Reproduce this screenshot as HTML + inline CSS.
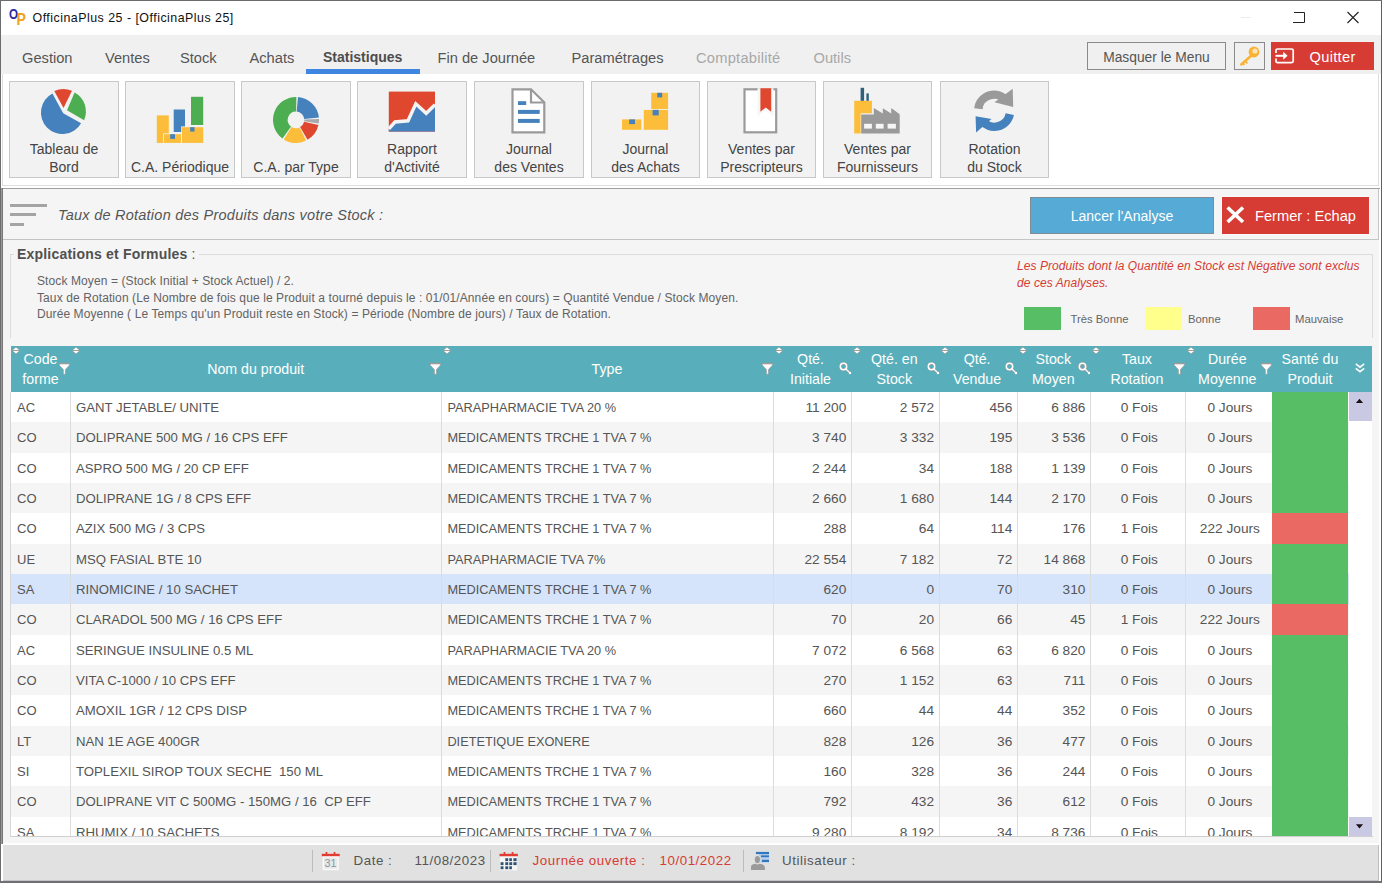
<!DOCTYPE html>
<html lang="fr"><head><meta charset="utf-8"><title>OfficinaPlus 25</title>
<style>
*{box-sizing:border-box;margin:0;padding:0}
html,body{width:1382px;height:883px;overflow:hidden;background:#fff}
body{position:relative;font-family:"Liberation Sans",sans-serif;color:#555;font-size:13px}
.a{position:absolute}
svg{position:absolute;overflow:visible}
/* frame */
#fl{left:0;top:0;width:1px;height:883px;background:#6c6c70}
#fr{left:1381px;top:0;width:1px;height:883px;background:#606064}
#ft{left:0;top:0;width:1382px;height:1px;background:#6c6c70}
#fb{left:0;top:881px;width:1382px;height:2px;background:#707074}
/* title */
#title{left:32.5px;top:9px;font-size:12.4px;letter-spacing:.49px;color:#111;line-height:18px;white-space:pre}
/* menu */
#menubar{left:1px;top:35px;width:1380px;height:39px;background:#f0f0f0}
.mi{position:absolute;top:48px;font-size:14.67px;line-height:20px;color:#555;white-space:pre}
.mi.dis{color:#a8a8a8}
.mi.act{font-weight:bold;color:#4d4d4d;font-size:14px}
#tabline{left:306px;top:69px;width:114px;height:5px;background:#3f86e2}
.tbtn{position:absolute;top:42px;height:28px;border:1px solid #8a8a8a;background:#f0f0f0;font-size:14.67px;color:#555;text-align:center;line-height:29px}
#quit{left:1271px;top:42px;width:103px;height:28px;background:#d63c33;color:#fff;font-size:14.67px;line-height:30px}
/* ribbon */
#ribbon{left:2px;top:74px;width:1377px;height:112px;border:1px solid #dedede;border-top:none;background:#fff}
.rb{position:absolute;top:81px;width:110px;height:97px;border:1px solid #c8c8c8;background:#f2f2f2;font-size:14px;line-height:18.6px;color:#444;text-align:center}
.rb .t{position:absolute;left:0;right:0;bottom:.3px}
/* content */
#sep{left:1px;top:188px;width:1379px;height:1px;background:#a0a0a0}
#content{left:3px;top:189px;width:1376px;height:654px;background:#f5f5f5}
#cl1{left:1px;top:188px;width:1px;height:656px;background:#9a9a9a}
#cl2{left:2px;top:188px;width:1px;height:656px;background:#777}
#tline{left:3px;top:239px;width:1375px;height:1px;background:#c4c4c4}
.bar{position:absolute;left:10px;height:3px;background:#a4a4a4}
#ptitle{left:58px;top:206px;font-size:14.5px;font-style:italic;line-height:18px;color:#555;white-space:pre;letter-spacing:.24px}
#lancer{left:1030px;top:197px;width:184px;height:37px;background:#55aad6;border:1px solid #7f8c96;color:#fff;font-size:14.05px;text-align:center;line-height:37px}
#fermer{left:1222px;top:197px;width:147px;height:37px;background:#d63c33;color:#fff;font-size:14.67px;line-height:39px;box-shadow:0 0 0 1px #fafafa}
/* groupbox */
#gb{left:10px;top:254px;width:1363px;height:84px;border:1px solid #dcdcdc;border-bottom:none}
#gbl{left:14px;top:245px;padding:0 3px;background:#f5f5f5;font-size:14px;letter-spacing:.2px;line-height:18px;color:#505050;white-space:pre}
.ex{position:absolute;left:37px;font-size:12px;letter-spacing:.1px;line-height:16px;color:#636363;white-space:pre}
.warn{position:absolute;left:1017px;font-size:12px;letter-spacing:.07px;font-style:italic;color:#d63c33;line-height:16px;white-space:pre}
.lg{position:absolute;top:307px;width:37px;height:23px}
.lgt{position:absolute;top:311px;font-size:11.3px;line-height:16px;color:#666;white-space:pre}
/* table */
#thead{left:11px;top:346px;width:1361px;height:46px;background:#58afbb;color:#fff;font-size:14.2px;overflow:hidden}
.th{position:absolute;top:0;text-align:center;line-height:20px;padding-top:3px;white-space:pre}
.th.one{padding-top:13px}
#tbody{left:11px;top:392px;width:1361px;height:444px;background:#fff;overflow:hidden}
#tbot{left:11px;top:836px;width:1362px;height:1px;background:#cfcfcf}
.row{position:absolute;left:0;width:1338px;height:30.4px;background:#fff}
.row.alt{background:#f5f5f5}
.row.sel{background:#d5e4fb}
.c{position:absolute;top:0;height:31px;line-height:30px;padding-top:1px;font-size:13px;color:#555;white-space:pre;overflow:hidden}
.c.al{padding-left:6px}
.c.ar{text-align:right;padding-right:5px}
.c.ac{text-align:center;padding-left:3px}
.hg{background:#57be65;padding:0}
.hr{background:#ea6a63;padding:0}
.vl{position:absolute;top:0;width:1px;height:445px;background:#dcdcdc}
#sbar{left:1349px;top:392px;width:23px;height:444px;background:#fff}
.sbtn{position:absolute;left:0;width:23px;background:#c9c9e3}
/* status */
#stw{left:3px;top:843px;width:1376px;height:2px;background:#fff}
#status{left:3px;top:845px;width:1376px;height:36px;background:#e1e1e1;border-right:1px solid #bdbdbd;border-bottom:1px solid #c4c4c4}
.st{position:absolute;top:852px;font-size:13.33px;line-height:18px;color:#555;white-space:pre;letter-spacing:.55px}
.st.red{color:#d63c33}
.ss{position:absolute;top:850px;width:1px;height:22px;background:#bcbcbc}
</style></head><body>
<div class="a" id="title">OfficinaPlus 25 - [OfficinaPlus 25]</div>
<svg style="left:0;top:0" width="30" height="30" viewBox="0 0 30 30"><text x="9" y="19.3" font-family="Liberation Sans" font-weight="bold" font-size="14" fill="#2b2ba5" textLength="9" lengthAdjust="spacingAndGlyphs">O</text><text x="16.6" y="25" font-family="Liberation Sans" font-weight="bold" font-size="16.5" fill="#f2a11e" textLength="9.4" lengthAdjust="spacingAndGlyphs">P</text></svg>
<svg style="left:1241px;top:17px" width="10" height="1" viewBox="0 0 10 1"><rect width="10" height="1" fill="#ececec"/></svg>
<svg style="left:1293px;top:12px" width="12" height="11" viewBox="0 0 12 11"><path d="M1 .5H11.5V10.5H0" fill="none" stroke="#222" stroke-width="1"/></svg>
<svg style="left:1347px;top:12px" width="12" height="11" viewBox="0 0 12 11"><path d="M.5 0L11.5 11M11.5 0L.5 11" fill="none" stroke="#222" stroke-width="1.1"/></svg>

<div class="a" id="menubar"></div>
<span class="mi" style="left:22px">Gestion</span>
<span class="mi" style="left:105px">Ventes</span>
<span class="mi" style="left:180px">Stock</span>
<span class="mi" style="left:249.5px">Achats</span>
<span class="mi act" style="left:323px;top:47px">Statistiques</span>
<span class="mi" style="left:437.5px">Fin de Journée</span>
<span class="mi" style="left:571.5px">Paramétrages</span>
<span class="mi dis" style="left:696px;letter-spacing:.25px">Comptabilité</span>
<span class="mi dis" style="left:813.5px">Outils</span>
<div class="a" id="tabline"></div>
<div class="tbtn" style="left:1087px;width:139px;font-size:13.8px">Masquer le Menu</div>
<div class="tbtn" style="left:1234px;width:31px"></div>
<svg style="left:1238px;top:45px" width="24" height="22" viewBox="0 0 24 22"><path d="M14 10L3.2 19.5" stroke="#f9b233" stroke-width="2.4" stroke-linecap="round"/><path d="M7 15.5L9.5 18.5M4.5 17.5L6.5 20" stroke="#f9b233" stroke-width="1.6"/><circle cx="16" cy="7" r="5.4" fill="#f9b233"/><circle cx="17" cy="6" r="2.6" fill="#f8e3bd"/></svg>
<div class="a" id="quit"><span class="a" style="left:38.5px;top:0;letter-spacing:.3px">Quitter</span></div>
<svg style="left:1275px;top:48px" width="20" height="16" viewBox="0 0 20 16"><path d="M1 5V2.6Q1 1 2.6 1H16.6Q18.2 1 18.2 2.6V13Q18.2 14.6 16.6 14.6H2.6Q1 14.6 1 13V10.6" fill="none" stroke="#fff" stroke-width="1.7"/><path d="M.5 7.8H11" stroke="#fff" stroke-width="2"/><path d="M8.2 3.8L12.6 7.8L8.2 11.8Z" fill="#fff"/></svg>

<div class="a" id="ribbon"></div>
<div class="rb" style="left:9px;width:110px"><div class="t">Tableau de<br>Bord</div></div>
<div class="rb" style="left:125px;width:110px"><div class="t">C.A. Périodique</div></div>
<div class="rb" style="left:241px;width:110px"><div class="t">C.A. par Type</div></div>
<div class="rb" style="left:357px;width:110px"><div class="t">Rapport<br>d'Activité</div></div>
<div class="rb" style="left:474px;width:110px"><div class="t">Journal<br>des Ventes</div></div>
<div class="rb" style="left:591px;width:109px"><div class="t">Journal<br>des Achats</div></div>
<div class="rb" style="left:707px;width:109px"><div class="t">Ventes par<br>Prescripteurs</div></div>
<div class="rb" style="left:823px;width:109px"><div class="t">Ventes par<br>Fournisseurs</div></div>
<div class="rb" style="left:940px;width:109px"><div class="t">Rotation<br>du Stock</div></div>

<svg style="left:0;top:0" width="1382" height="190" viewBox="0 0 1382 190"><path d="M63.2 113.2L81.1 123.2A21.5 21.5 0 1 1 52.4 93.5Z" fill="#4581bd"/><path d="M63.5 108.0L54.3 91.1A21 21 0 0 1 72.0 90.8Z" fill="#e0472f"/><path d="M67.0 110.3L74.6 92.5A21.5 21.5 0 0 1 84.1 120.2Z" fill="#4cae50"/><rect x="191.0" y="96.8" width="12.2" height="28.2" fill="#4cae50"/><rect x="173.7" y="109.5" width="11.3" height="22.5" fill="#4581bd"/><rect x="156.8" y="115.4" width="12.0" height="27.5" fill="#fbbd3a"/><rect x="163.2" y="133.4" width="18.6" height="9.5" fill="#f2f2f2"/><rect x="164.0" y="134.2" width="17.0" height="8.7" fill="#fbbd3a"/><rect x="181.2" y="126.4" width="22.0" height="16.5" fill="#f2f2f2"/><rect x="182.0" y="127.2" width="21.2" height="15.7" fill="#fbbd3a"/><rect x="170.2" y="134.2" width="4.8" height="4.7" fill="#4581bd"/><rect x="190.2" y="127.2" width="4.3" height="4.4" fill="#4581bd"/><path d="M282.5 138.5A23 23 0 0 1 296.4 96.9L296.1 111.6A8.3 8.3 0 0 0 291.1 126.6Z" fill="#4cae50"/><path d="M298.0 97.0A23 23 0 0 1 318.9 117.5L304.3 119.0A8.3 8.3 0 0 0 296.7 111.6Z" fill="#4581bd"/><path d="M319.0 119.1A23 23 0 0 1 318.7 123.5L304.2 121.2A8.3 8.3 0 0 0 304.3 119.6Z" fill="#a9a9a9"/><path d="M318.4 125.1A23 23 0 0 1 307.5 139.8L300.1 127.1A8.3 8.3 0 0 0 304.1 121.8Z" fill="#e0472f"/><path d="M306.1 140.6A23 23 0 0 1 283.8 139.4L291.6 126.9A8.3 8.3 0 0 0 299.6 127.4Z" fill="#fbbd3a"/><rect x="388.8" y="91.6" width="46.2" height="40.0" fill="#e0472f"/><path d="M388.8 128.8L395 122L408 120.8L415.8 103.8L426.2 113.3L435 104.7L435 131.6L388.8 131.6Z" fill="#4581bd"/><path d="M388.8 128.8L395 122L408 120.8L415.8 103.8L426.2 113.3L435 104.7" fill="none" stroke="#f4f4f4" stroke-width="3.4" stroke-linejoin="miter"/><path d="M512.5 89.3H531L544.3 102.5V132.3H512.5Z" fill="#fff" stroke="#9a9a9a" stroke-width="2.2"/><path d="M531 89.3V102.5H544.3" fill="none" stroke="#9a9a9a" stroke-width="2.2"/><rect x="518.0" y="101.2" width="8.2" height="3.8" fill="#4581bd"/><rect x="518.0" y="109.9" width="21.7" height="4.0" fill="#4581bd"/><rect x="518.0" y="118.9" width="21.7" height="4.0" fill="#4581bd"/><rect x="651.2" y="92.8" width="16.9" height="16.2" fill="#fbbd3a"/><rect x="643.8" y="109.9" width="24.3" height="19.9" fill="#fbbd3a"/><rect x="622.0" y="119.4" width="19.3" height="10.4" fill="#fbbd3a"/><rect x="657.3" y="92.8" width="4.9" height="4.6" fill="#4581bd"/><rect x="652.6" y="109.9" width="6.1" height="5.5" fill="#4581bd"/><rect x="629.2" y="119.4" width="5.8" height="4.7" fill="#4581bd"/><rect x="744.5" y="89.3" width="31.7" height="43" fill="#fff" stroke="#9a9a9a" stroke-width="2.2"/><path d="M757.5 88.2H773.5V116.5L765.5 110L757.5 116.5Z" fill="#f6f6f6"/><path d="M760.4 88.2H771.2V111.8L765.8 107.4L760.4 111.8Z" fill="#e0472f"/><path d="M854.2 100.8H871.9V113.3H860.6V133.4H854.2Z" fill="#fbbd3a"/><rect x="860.6" y="87.8" width="3.5" height="13.0" fill="#2f607c"/><rect x="866.4" y="93.4" width="2.4" height="7.4" fill="#2f607c"/><path d="M861.2 133.5V114.5H873.8V107.9L882.8 113.4V108.2L891.2 113.4V107.9L899.7 114.2V133.5Z" fill="#9a9a9a"/><rect x="864.1" y="123.8" width="7.8" height="4.8" fill="#f6f6f6"/><rect x="875.8" y="123.8" width="7.8" height="4.8" fill="#f6f6f6"/><rect x="887.6" y="123.8" width="8.3" height="4.8" fill="#f6f6f6"/><path d="M978.4 108.7A15.7 15.7 0 0 1 1006.5 100.9" fill="none" stroke="#9a9a9a" stroke-width="8.4"/><path d="M1012.7 88.8L1013.2 107L994.5 102.3Z" fill="#9a9a9a"/><path d="M1009.8 114.2A15.7 15.7 0 0 1 981.7 120.3" fill="none" stroke="#4581bd" stroke-width="8.4"/><path d="M975.6 116.3L976.1 132.5L991.5 119Z" fill="#4581bd"/></svg>
<div class="a" id="sep"></div>
<div class="a" id="content"></div>
<div class="a" id="cl1"></div><div class="a" id="cl2"></div>
<div class="a" id="tline"></div><div class="a" style="left:1378px;top:189px;width:1px;height:51px;background:#c4c4c4"></div>
<i class="bar" style="top:204px;width:37px"></i><i class="bar" style="top:213px;width:25.5px"></i><i class="bar" style="top:223px;width:13.5px"></i>
<div class="a" id="ptitle">Taux de Rotation des Produits dans votre Stock :</div>
<div class="a" id="lancer">Lancer l'Analyse</div>
<div class="a" id="fermer"><span class="a" style="left:33px;top:0">Fermer : Echap</span></div>
<svg style="left:1225.6px;top:206.2px" width="19" height="18" viewBox="0 0 19 18"><path d="M1.6 1.5L17 16M17 1.5L1.6 16" stroke="#fff" stroke-width="3.6" fill="none"/></svg>

<div class="a" id="gb"></div>
<div class="a" id="gbl"><b>Explications et Formules</b> :</div>
<div class="ex" style="top:273px">Stock Moyen = (Stock Initial + Stock Actuel) / 2.</div>
<div class="ex" style="top:289.5px">Taux de Rotation (Le Nombre de fois que le Produit a tourné depuis le : 01/01/Année en cours) = Quantité Vendue / Stock Moyen.</div>
<div class="ex" style="top:306px">Durée Moyenne ( Le Temps qu'un Produit reste en Stock) = Période (Nombre de jours) / Taux de Rotation.</div>
<div class="warn" style="top:258px">Les Produits dont la Quantité en Stock est Négative sont exclus</div>
<div class="warn" style="top:274.5px">de ces Analyses.</div>
<i class="lg" style="left:1024px;background:#57be65"></i><span class="lgt" style="left:1070.5px">Très Bonne</span>
<i class="lg" style="left:1145px;background:#ffff8c"></i><span class="lgt" style="left:1188px">Bonne</span>
<i class="lg" style="left:1253px;background:#ea6a63"></i><span class="lgt" style="left:1295px">Mauvaise</span>

<div class="a" id="thead">
<span class="th" style="left:0;width:59px">Code<br>forme</span>
<span class="th one" style="left:59px;width:371.4px">Nom du produit</span>
<span class="th one" style="left:430.4px;width:331.1px">Type</span>
<span class="th" style="left:761.5px;width:76px">Qté.<br>Initiale</span>
<span class="th" style="left:840.3px;width:86px">Qté. en<br>Stock</span>
<span class="th" style="left:928.1px;width:76px">Qté.<br>Vendue</span>
<span class="th" style="left:1006.3px;width:72px">Stock<br>Moyen</span>
<span class="th" style="left:1079.4px;width:93px">Taux<br>Rotation</span>
<span class="th" style="left:1174.3px;width:84px">Durée<br>Moyenne</span>
<span class="th" style="left:1260.5px;width:77px">Santé du<br>Produit</span>
</div>
<svg style="left:12.3px;top:347px" width="8" height="7" viewBox="0 0 8 7"><path d="M4 -.2L8 3.5L4 7.2L0 3.5Z" fill="#a59c9c"/><path d="M4 .5L7 3.1H1Z M1 3.9H7L4 6.5Z" fill="#fff"/></svg><svg style="left:72.0px;top:347px" width="8" height="7" viewBox="0 0 8 7"><path d="M4 -.2L8 3.5L4 7.2L0 3.5Z" fill="#a59c9c"/><path d="M4 .5L7 3.1H1Z M1 3.9H7L4 6.5Z" fill="#fff"/></svg><svg style="left:443.4px;top:347px" width="8" height="7" viewBox="0 0 8 7"><path d="M4 -.2L8 3.5L4 7.2L0 3.5Z" fill="#a59c9c"/><path d="M4 .5L7 3.1H1Z M1 3.9H7L4 6.5Z" fill="#fff"/></svg><svg style="left:774.5px;top:347px" width="8" height="7" viewBox="0 0 8 7"><path d="M4 -.2L8 3.5L4 7.2L0 3.5Z" fill="#a59c9c"/><path d="M4 .5L7 3.1H1Z M1 3.9H7L4 6.5Z" fill="#fff"/></svg><svg style="left:853.3px;top:347px" width="8" height="7" viewBox="0 0 8 7"><path d="M4 -.2L8 3.5L4 7.2L0 3.5Z" fill="#a59c9c"/><path d="M4 .5L7 3.1H1Z M1 3.9H7L4 6.5Z" fill="#fff"/></svg><svg style="left:941.1px;top:347px" width="8" height="7" viewBox="0 0 8 7"><path d="M4 -.2L8 3.5L4 7.2L0 3.5Z" fill="#a59c9c"/><path d="M4 .5L7 3.1H1Z M1 3.9H7L4 6.5Z" fill="#fff"/></svg><svg style="left:1019.3px;top:347px" width="8" height="7" viewBox="0 0 8 7"><path d="M4 -.2L8 3.5L4 7.2L0 3.5Z" fill="#a59c9c"/><path d="M4 .5L7 3.1H1Z M1 3.9H7L4 6.5Z" fill="#fff"/></svg><svg style="left:1092.4px;top:347px" width="8" height="7" viewBox="0 0 8 7"><path d="M4 -.2L8 3.5L4 7.2L0 3.5Z" fill="#a59c9c"/><path d="M4 .5L7 3.1H1Z M1 3.9H7L4 6.5Z" fill="#fff"/></svg><svg style="left:1187.3px;top:347px" width="8" height="7" viewBox="0 0 8 7"><path d="M4 -.2L8 3.5L4 7.2L0 3.5Z" fill="#a59c9c"/><path d="M4 .5L7 3.1H1Z M1 3.9H7L4 6.5Z" fill="#fff"/></svg><svg style="left:59.0px;top:363.3px" width="11" height="12" viewBox="0 0 11 12"><path d="M.3 .3H10.4V2.2L6.4 6.6V11.2H4.4V6.6L.3 2.2Z" fill="#fff" stroke="#9c9292" stroke-width=".6"/><rect x="0" y="0" width="10.7" height="1.3" fill="#a39999"/></svg><svg style="left:430.4px;top:363.3px" width="11" height="12" viewBox="0 0 11 12"><path d="M.3 .3H10.4V2.2L6.4 6.6V11.2H4.4V6.6L.3 2.2Z" fill="#fff" stroke="#9c9292" stroke-width=".6"/><rect x="0" y="0" width="10.7" height="1.3" fill="#a39999"/></svg><svg style="left:761.5px;top:363.3px" width="11" height="12" viewBox="0 0 11 12"><path d="M.3 .3H10.4V2.2L6.4 6.6V11.2H4.4V6.6L.3 2.2Z" fill="#fff" stroke="#9c9292" stroke-width=".6"/><rect x="0" y="0" width="10.7" height="1.3" fill="#a39999"/></svg><svg style="left:1174.3px;top:363.3px" width="11" height="12" viewBox="0 0 11 12"><path d="M.3 .3H10.4V2.2L6.4 6.6V11.2H4.4V6.6L.3 2.2Z" fill="#fff" stroke="#9c9292" stroke-width=".6"/><rect x="0" y="0" width="10.7" height="1.3" fill="#a39999"/></svg><svg style="left:1260.5px;top:363.3px" width="11" height="12" viewBox="0 0 11 12"><path d="M.3 .3H10.4V2.2L6.4 6.6V11.2H4.4V6.6L.3 2.2Z" fill="#fff" stroke="#9c9292" stroke-width=".6"/><rect x="0" y="0" width="10.7" height="1.3" fill="#a39999"/></svg><svg style="left:839.0px;top:362px" width="13" height="13" viewBox="0 0 13 13"><circle cx="4.5" cy="4.5" r="3.2" fill="none" stroke="#a09696" stroke-width="2.4"/><path d="M7 7L11 11" stroke="#a09696" stroke-width="2.2" stroke-linecap="round"/><circle cx="4.5" cy="4.5" r="3.2" fill="none" stroke="#fff" stroke-width="1.5"/><path d="M7 7L10.6 10.6" stroke="#fff" stroke-width="1.2"/><circle cx="11" cy="11" r="1.2" fill="#fff"/></svg><svg style="left:926.8px;top:362px" width="13" height="13" viewBox="0 0 13 13"><circle cx="4.5" cy="4.5" r="3.2" fill="none" stroke="#a09696" stroke-width="2.4"/><path d="M7 7L11 11" stroke="#a09696" stroke-width="2.2" stroke-linecap="round"/><circle cx="4.5" cy="4.5" r="3.2" fill="none" stroke="#fff" stroke-width="1.5"/><path d="M7 7L10.6 10.6" stroke="#fff" stroke-width="1.2"/><circle cx="11" cy="11" r="1.2" fill="#fff"/></svg><svg style="left:1005.0px;top:362px" width="13" height="13" viewBox="0 0 13 13"><circle cx="4.5" cy="4.5" r="3.2" fill="none" stroke="#a09696" stroke-width="2.4"/><path d="M7 7L11 11" stroke="#a09696" stroke-width="2.2" stroke-linecap="round"/><circle cx="4.5" cy="4.5" r="3.2" fill="none" stroke="#fff" stroke-width="1.5"/><path d="M7 7L10.6 10.6" stroke="#fff" stroke-width="1.2"/><circle cx="11" cy="11" r="1.2" fill="#fff"/></svg><svg style="left:1078.1px;top:362px" width="13" height="13" viewBox="0 0 13 13"><circle cx="4.5" cy="4.5" r="3.2" fill="none" stroke="#a09696" stroke-width="2.4"/><path d="M7 7L11 11" stroke="#a09696" stroke-width="2.2" stroke-linecap="round"/><circle cx="4.5" cy="4.5" r="3.2" fill="none" stroke="#fff" stroke-width="1.5"/><path d="M7 7L10.6 10.6" stroke="#fff" stroke-width="1.2"/><circle cx="11" cy="11" r="1.2" fill="#fff"/></svg>
<svg style="left:1355px;top:363px" width="10" height="10" viewBox="0 0 10 10"><path d="M.8 .8L5 4.2L9.2 .8M.8 5.3L5 8.7L9.2 5.3" fill="none" stroke="#fff" stroke-width="1.5"/></svg>
<div class="a" id="tbody">
<div class="row" style="top:0px;height:30px"><span class="c al" style="left:0.0px;width:59.0px">AC</span><span class="c al" style="left:59.0px;width:371.4px;font-size:13.2px">GANT JETABLE/ UNITE</span><span class="c al" style="left:430.4px;width:331.1px;font-size:12.75px">PARAPHARMACIE TVA 20 %</span><span class="c ar" style="left:761.5px;width:78.8px;font-size:13.7px">11 200</span><span class="c ar" style="left:840.3px;width:87.8px;font-size:13.7px">2 572</span><span class="c ar" style="left:928.1px;width:78.2px;font-size:13.7px">456</span><span class="c ar" style="left:1006.3px;width:73.1px;font-size:13.7px">6 886</span><span class="c ac" style="left:1079.4px;width:94.9px;font-size:13.7px">0 Fois</span><span class="c ac" style="left:1174.3px;width:86.2px;font-size:13.7px">0 Jours</span><span class="c hg" style="left:1260.5px;width:76.8px"></span></div>
<div class="row alt" style="top:30px;height:31px"><span class="c al" style="left:0.0px;width:59.0px">CO</span><span class="c al" style="left:59.0px;width:371.4px;font-size:13.2px">DOLIPRANE 500 MG / 16 CPS EFF</span><span class="c al" style="left:430.4px;width:331.1px;font-size:12.75px">MEDICAMENTS TRCHE 1 TVA 7 %</span><span class="c ar" style="left:761.5px;width:78.8px;font-size:13.7px">3 740</span><span class="c ar" style="left:840.3px;width:87.8px;font-size:13.7px">3 332</span><span class="c ar" style="left:928.1px;width:78.2px;font-size:13.7px">195</span><span class="c ar" style="left:1006.3px;width:73.1px;font-size:13.7px">3 536</span><span class="c ac" style="left:1079.4px;width:94.9px;font-size:13.7px">0 Fois</span><span class="c ac" style="left:1174.3px;width:86.2px;font-size:13.7px">0 Jours</span><span class="c hg" style="left:1260.5px;width:76.8px"></span></div>
<div class="row" style="top:61px;height:30px"><span class="c al" style="left:0.0px;width:59.0px">CO</span><span class="c al" style="left:59.0px;width:371.4px;font-size:13.2px">ASPRO 500 MG / 20 CP EFF</span><span class="c al" style="left:430.4px;width:331.1px;font-size:12.75px">MEDICAMENTS TRCHE 1 TVA 7 %</span><span class="c ar" style="left:761.5px;width:78.8px;font-size:13.7px">2 244</span><span class="c ar" style="left:840.3px;width:87.8px;font-size:13.7px">34</span><span class="c ar" style="left:928.1px;width:78.2px;font-size:13.7px">188</span><span class="c ar" style="left:1006.3px;width:73.1px;font-size:13.7px">1 139</span><span class="c ac" style="left:1079.4px;width:94.9px;font-size:13.7px">0 Fois</span><span class="c ac" style="left:1174.3px;width:86.2px;font-size:13.7px">0 Jours</span><span class="c hg" style="left:1260.5px;width:76.8px"></span></div>
<div class="row alt" style="top:91px;height:30px"><span class="c al" style="left:0.0px;width:59.0px">CO</span><span class="c al" style="left:59.0px;width:371.4px;font-size:13.2px">DOLIPRANE 1G / 8 CPS EFF</span><span class="c al" style="left:430.4px;width:331.1px;font-size:12.75px">MEDICAMENTS TRCHE 1 TVA 7 %</span><span class="c ar" style="left:761.5px;width:78.8px;font-size:13.7px">2 660</span><span class="c ar" style="left:840.3px;width:87.8px;font-size:13.7px">1 680</span><span class="c ar" style="left:928.1px;width:78.2px;font-size:13.7px">144</span><span class="c ar" style="left:1006.3px;width:73.1px;font-size:13.7px">2 170</span><span class="c ac" style="left:1079.4px;width:94.9px;font-size:13.7px">0 Fois</span><span class="c ac" style="left:1174.3px;width:86.2px;font-size:13.7px">0 Jours</span><span class="c hg" style="left:1260.5px;width:76.8px"></span></div>
<div class="row" style="top:121px;height:31px"><span class="c al" style="left:0.0px;width:59.0px">CO</span><span class="c al" style="left:59.0px;width:371.4px;font-size:13.2px">AZIX 500 MG / 3 CPS</span><span class="c al" style="left:430.4px;width:331.1px;font-size:12.75px">MEDICAMENTS TRCHE 1 TVA 7 %</span><span class="c ar" style="left:761.5px;width:78.8px;font-size:13.7px">288</span><span class="c ar" style="left:840.3px;width:87.8px;font-size:13.7px">64</span><span class="c ar" style="left:928.1px;width:78.2px;font-size:13.7px">114</span><span class="c ar" style="left:1006.3px;width:73.1px;font-size:13.7px">176</span><span class="c ac" style="left:1079.4px;width:94.9px;font-size:13.7px">1 Fois</span><span class="c ac" style="left:1174.3px;width:86.2px;font-size:13.7px">222 Jours</span><span class="c hr" style="left:1260.5px;width:76.8px"></span></div>
<div class="row alt" style="top:152px;height:30px"><span class="c al" style="left:0.0px;width:59.0px">UE</span><span class="c al" style="left:59.0px;width:371.4px;font-size:13.2px">MSQ FASIAL BTE 10</span><span class="c al" style="left:430.4px;width:331.1px;font-size:12.75px">PARAPHARMACIE TVA 7%</span><span class="c ar" style="left:761.5px;width:78.8px;font-size:13.7px">22 554</span><span class="c ar" style="left:840.3px;width:87.8px;font-size:13.7px">7 182</span><span class="c ar" style="left:928.1px;width:78.2px;font-size:13.7px">72</span><span class="c ar" style="left:1006.3px;width:73.1px;font-size:13.7px">14 868</span><span class="c ac" style="left:1079.4px;width:94.9px;font-size:13.7px">0 Fois</span><span class="c ac" style="left:1174.3px;width:86.2px;font-size:13.7px">0 Jours</span><span class="c hg" style="left:1260.5px;width:76.8px"></span></div>
<div class="row sel" style="top:182px;height:30px"><span class="c al" style="left:0.0px;width:59.0px">SA</span><span class="c al" style="left:59.0px;width:371.4px;font-size:13.2px">RINOMICINE / 10 SACHET</span><span class="c al" style="left:430.4px;width:331.1px;font-size:12.75px">MEDICAMENTS TRCHE 1 TVA 7 %</span><span class="c ar" style="left:761.5px;width:78.8px;font-size:13.7px">620</span><span class="c ar" style="left:840.3px;width:87.8px;font-size:13.7px">0</span><span class="c ar" style="left:928.1px;width:78.2px;font-size:13.7px">70</span><span class="c ar" style="left:1006.3px;width:73.1px;font-size:13.7px">310</span><span class="c ac" style="left:1079.4px;width:94.9px;font-size:13.7px">0 Fois</span><span class="c ac" style="left:1174.3px;width:86.2px;font-size:13.7px">0 Jours</span><span class="c hg" style="left:1260.5px;width:76.8px"></span></div>
<div class="row alt" style="top:212px;height:31px"><span class="c al" style="left:0.0px;width:59.0px">CO</span><span class="c al" style="left:59.0px;width:371.4px;font-size:13.2px">CLARADOL 500 MG / 16 CPS EFF</span><span class="c al" style="left:430.4px;width:331.1px;font-size:12.75px">MEDICAMENTS TRCHE 1 TVA 7 %</span><span class="c ar" style="left:761.5px;width:78.8px;font-size:13.7px">70</span><span class="c ar" style="left:840.3px;width:87.8px;font-size:13.7px">20</span><span class="c ar" style="left:928.1px;width:78.2px;font-size:13.7px">66</span><span class="c ar" style="left:1006.3px;width:73.1px;font-size:13.7px">45</span><span class="c ac" style="left:1079.4px;width:94.9px;font-size:13.7px">1 Fois</span><span class="c ac" style="left:1174.3px;width:86.2px;font-size:13.7px">222 Jours</span><span class="c hr" style="left:1260.5px;width:76.8px"></span></div>
<div class="row" style="top:243px;height:30px"><span class="c al" style="left:0.0px;width:59.0px">AC</span><span class="c al" style="left:59.0px;width:371.4px;font-size:13.2px">SERINGUE INSULINE 0.5 ML</span><span class="c al" style="left:430.4px;width:331.1px;font-size:12.75px">PARAPHARMACIE TVA 20 %</span><span class="c ar" style="left:761.5px;width:78.8px;font-size:13.7px">7 072</span><span class="c ar" style="left:840.3px;width:87.8px;font-size:13.7px">6 568</span><span class="c ar" style="left:928.1px;width:78.2px;font-size:13.7px">63</span><span class="c ar" style="left:1006.3px;width:73.1px;font-size:13.7px">6 820</span><span class="c ac" style="left:1079.4px;width:94.9px;font-size:13.7px">0 Fois</span><span class="c ac" style="left:1174.3px;width:86.2px;font-size:13.7px">0 Jours</span><span class="c hg" style="left:1260.5px;width:76.8px"></span></div>
<div class="row alt" style="top:273px;height:30px"><span class="c al" style="left:0.0px;width:59.0px">CO</span><span class="c al" style="left:59.0px;width:371.4px;font-size:13.2px">VITA C-1000 / 10 CPS EFF</span><span class="c al" style="left:430.4px;width:331.1px;font-size:12.75px">MEDICAMENTS TRCHE 1 TVA 7 %</span><span class="c ar" style="left:761.5px;width:78.8px;font-size:13.7px">270</span><span class="c ar" style="left:840.3px;width:87.8px;font-size:13.7px">1 152</span><span class="c ar" style="left:928.1px;width:78.2px;font-size:13.7px">63</span><span class="c ar" style="left:1006.3px;width:73.1px;font-size:13.7px">711</span><span class="c ac" style="left:1079.4px;width:94.9px;font-size:13.7px">0 Fois</span><span class="c ac" style="left:1174.3px;width:86.2px;font-size:13.7px">0 Jours</span><span class="c hg" style="left:1260.5px;width:76.8px"></span></div>
<div class="row" style="top:303px;height:31px"><span class="c al" style="left:0.0px;width:59.0px">CO</span><span class="c al" style="left:59.0px;width:371.4px;font-size:13.2px">AMOXIL 1GR / 12 CPS DISP</span><span class="c al" style="left:430.4px;width:331.1px;font-size:12.75px">MEDICAMENTS TRCHE 1 TVA 7 %</span><span class="c ar" style="left:761.5px;width:78.8px;font-size:13.7px">660</span><span class="c ar" style="left:840.3px;width:87.8px;font-size:13.7px">44</span><span class="c ar" style="left:928.1px;width:78.2px;font-size:13.7px">44</span><span class="c ar" style="left:1006.3px;width:73.1px;font-size:13.7px">352</span><span class="c ac" style="left:1079.4px;width:94.9px;font-size:13.7px">0 Fois</span><span class="c ac" style="left:1174.3px;width:86.2px;font-size:13.7px">0 Jours</span><span class="c hg" style="left:1260.5px;width:76.8px"></span></div>
<div class="row alt" style="top:334px;height:30px"><span class="c al" style="left:0.0px;width:59.0px">LT</span><span class="c al" style="left:59.0px;width:371.4px;font-size:13.2px">NAN 1E AGE 400GR</span><span class="c al" style="left:430.4px;width:331.1px;font-size:12.75px">DIETETIQUE EXONERE</span><span class="c ar" style="left:761.5px;width:78.8px;font-size:13.7px">828</span><span class="c ar" style="left:840.3px;width:87.8px;font-size:13.7px">126</span><span class="c ar" style="left:928.1px;width:78.2px;font-size:13.7px">36</span><span class="c ar" style="left:1006.3px;width:73.1px;font-size:13.7px">477</span><span class="c ac" style="left:1079.4px;width:94.9px;font-size:13.7px">0 Fois</span><span class="c ac" style="left:1174.3px;width:86.2px;font-size:13.7px">0 Jours</span><span class="c hg" style="left:1260.5px;width:76.8px"></span></div>
<div class="row" style="top:364px;height:30px"><span class="c al" style="left:0.0px;width:59.0px">SI</span><span class="c al" style="left:59.0px;width:371.4px;font-size:13.2px">TOPLEXIL SIROP TOUX SECHE  150 ML</span><span class="c al" style="left:430.4px;width:331.1px;font-size:12.75px">MEDICAMENTS TRCHE 1 TVA 7 %</span><span class="c ar" style="left:761.5px;width:78.8px;font-size:13.7px">160</span><span class="c ar" style="left:840.3px;width:87.8px;font-size:13.7px">328</span><span class="c ar" style="left:928.1px;width:78.2px;font-size:13.7px">36</span><span class="c ar" style="left:1006.3px;width:73.1px;font-size:13.7px">244</span><span class="c ac" style="left:1079.4px;width:94.9px;font-size:13.7px">0 Fois</span><span class="c ac" style="left:1174.3px;width:86.2px;font-size:13.7px">0 Jours</span><span class="c hg" style="left:1260.5px;width:76.8px"></span></div>
<div class="row alt" style="top:394px;height:31px"><span class="c al" style="left:0.0px;width:59.0px">CO</span><span class="c al" style="left:59.0px;width:371.4px;font-size:13.2px">DOLIPRANE VIT C 500MG - 150MG / 16  CP EFF</span><span class="c al" style="left:430.4px;width:331.1px;font-size:12.75px">MEDICAMENTS TRCHE 1 TVA 7 %</span><span class="c ar" style="left:761.5px;width:78.8px;font-size:13.7px">792</span><span class="c ar" style="left:840.3px;width:87.8px;font-size:13.7px">432</span><span class="c ar" style="left:928.1px;width:78.2px;font-size:13.7px">36</span><span class="c ar" style="left:1006.3px;width:73.1px;font-size:13.7px">612</span><span class="c ac" style="left:1079.4px;width:94.9px;font-size:13.7px">0 Fois</span><span class="c ac" style="left:1174.3px;width:86.2px;font-size:13.7px">0 Jours</span><span class="c hg" style="left:1260.5px;width:76.8px"></span></div>
<div class="row" style="top:425px;height:30px"><span class="c al" style="left:0.0px;width:59.0px">SA</span><span class="c al" style="left:59.0px;width:371.4px;font-size:13.2px">RHUMIX / 10 SACHETS</span><span class="c al" style="left:430.4px;width:331.1px;font-size:12.75px">MEDICAMENTS TRCHE 1 TVA 7 %</span><span class="c ar" style="left:761.5px;width:78.8px;font-size:13.7px">9 280</span><span class="c ar" style="left:840.3px;width:87.8px;font-size:13.7px">8 192</span><span class="c ar" style="left:928.1px;width:78.2px;font-size:13.7px">34</span><span class="c ar" style="left:1006.3px;width:73.1px;font-size:13.7px">8 736</span><span class="c ac" style="left:1079.4px;width:94.9px;font-size:13.7px">0 Fois</span><span class="c ac" style="left:1174.3px;width:86.2px;font-size:13.7px">0 Jours</span><span class="c hg" style="left:1260.5px;width:76.8px"></span></div>
<i class="vl" style="left:59.0px"></i><i class="vl" style="left:430.4px"></i><i class="vl" style="left:761.5px"></i><i class="vl" style="left:840.3px"></i><i class="vl" style="left:928.1px"></i><i class="vl" style="left:1006.3px"></i><i class="vl" style="left:1079.4px"></i><i class="vl" style="left:1174.3px"></i>
</div>
<div class="a" id="tbot"></div><div class="a" style="left:10px;top:392px;width:1px;height:445px;background:#d6d6d6"></div>
<div class="a" id="sbar"><i class="sbtn" style="top:0;height:28.5px"></i><i class="sbtn" style="top:424.5px;height:19.5px"></i><svg style="left:0;top:0" width="23" height="444" viewBox="0 0 23 444"><path d="M6.9 11L14.1 11L10.5 6.8Z M6.9 432.2H14.1L10.5 436.4Z" fill="#1a1018"/></svg></div>

<div class="a" id="stw"></div>
<div class="a" id="status"></div>
<i class="ss" style="left:312px"></i><i class="ss" style="left:490px"></i><i class="ss" style="left:743px"></i>
<svg style="left:0;top:845px" width="800" height="36" viewBox="0 845 800 36">
<rect x="322.6" y="856" width="16.2" height="14.2" fill="#fafafa"/><rect x="324" y="857.6" width="13.4" height="11.2" fill="#e9e9e9"/>
<rect x="321.8" y="853.8" width="17.9" height="2.4" fill="#e23b33"/><rect x="325.6" y="852" width="1.7" height="2.5" fill="#e23b33"/><rect x="333.7" y="852" width="1.7" height="2.5" fill="#e23b33"/>
<text x="324.6" y="867.4" font-family="Liberation Sans" font-size="10.5" fill="#8a96a2" textLength="12" lengthAdjust="spacingAndGlyphs">31</text>
<rect x="499.9" y="856.4" width="17.3" height="14" fill="#f6f6f6"/>
<rect x="499.5" y="853.8" width="18.4" height="2.4" fill="#e23b33"/><rect x="503.6" y="852" width="1.7" height="2.5" fill="#e23b33"/><rect x="511.7" y="852" width="1.7" height="2.5" fill="#e23b33"/>
<g fill="#2f5173"><rect x="505.3" y="858.2" width="2.9" height="2.9"/><rect x="509.3" y="858.2" width="2.6" height="2.9"/><rect x="513.4" y="858.2" width="3.2" height="2.9"/>
<rect x="500.6" y="862.2" width="2.9" height="2.9"/><rect x="505.3" y="862.2" width="2.9" height="2.9"/><rect x="509.3" y="862.2" width="2.9" height="2.9"/><rect x="513.4" y="862.2" width="3.2" height="2.9"/>
<rect x="500.6" y="866.3" width="2.9" height="2.9"/><rect x="505.3" y="866.3" width="2.9" height="2.9"/><rect x="509.3" y="866.3" width="2.6" height="2.9"/></g>
<rect x="759" y="852" width="10" height="10.6" fill="#b9cfe9"/>
<rect x="755.9" y="851.9" width="13.1" height="2.2" fill="#2f78c0"/><rect x="761" y="855.4" width="8" height="1.8" fill="#2f78c0"/><rect x="762" y="859.8" width="7" height="2.2" fill="#2f78c0"/>
<ellipse cx="757.4" cy="859.6" rx="3.3" ry="4.2" fill="#e1e1e1"/><ellipse cx="757.4" cy="859.6" rx="2.6" ry="3.6" fill="#9a9a9a"/>
<path d="M751 870V867Q751 864.6 754 864L755.5 863.7Q757.4 865.3 759.5 863.7L762 864.2Q764.9 865 764.9 867.5V870Z" fill="#9a9a9a"/>
</svg>
<span class="st" style="left:353.5px">Date :</span>
<span class="st" style="left:414.5px">11/08/2023</span>
<span class="st red" style="left:532.5px">Journée ouverte :</span>
<span class="st red" style="left:659.5px">10/01/2022</span>
<span class="st" style="left:782px">Utilisateur :</span>

<div class="a" id="fl"></div><div class="a" id="fr"></div><div class="a" id="ft"></div><div class="a" id="fb"></div>
</body></html>
